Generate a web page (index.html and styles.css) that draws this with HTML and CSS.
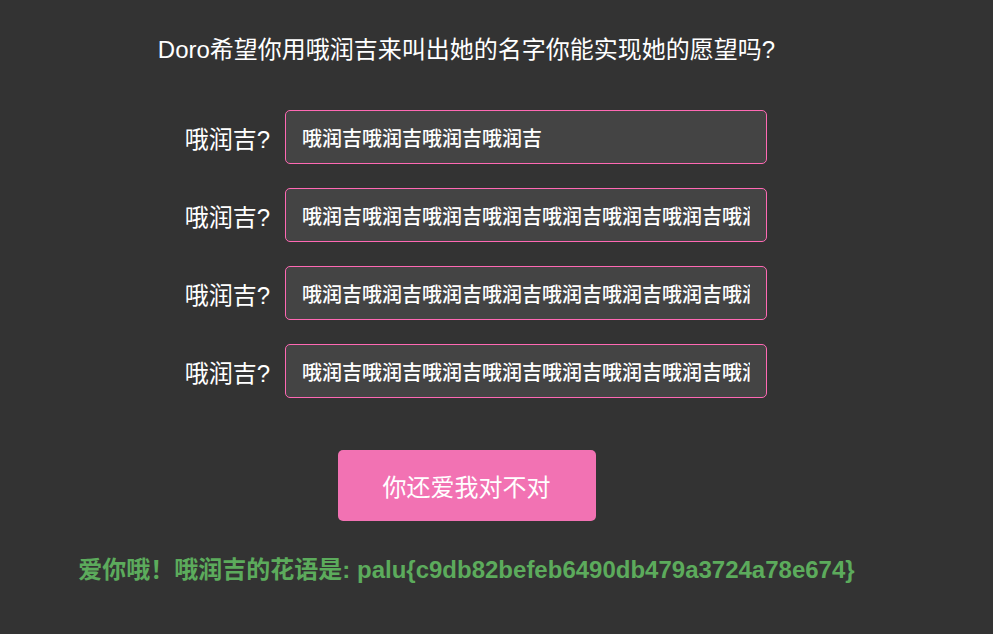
FILE: index.html
```html
<!DOCTYPE html>
<html lang="zh-CN">
<head>
  <meta charset="UTF-8">
  <meta name="viewport" content="width=device-width, initial-scale=1.0">
  <title>哦润吉</title>
  <link rel="stylesheet" href="styles.css">
</head>
<body>
  <div class="page">
    <h1>Doro希望你用哦润吉来叫出她的名字你能实现她的愿望吗?</h1>
    <form class="wish-form" onsubmit="return false;">
      <div class="row">
        <label for="a1">哦润吉?</label>
        <input id="a1" type="text" value="哦润吉哦润吉哦润吉哦润吉">
      </div>
      <div class="row">
        <label for="a2">哦润吉?</label>
        <input id="a2" type="text" value="哦润吉哦润吉哦润吉哦润吉哦润吉哦润吉哦润吉哦润吉">
      </div>
      <div class="row">
        <label for="a3">哦润吉?</label>
        <input id="a3" type="text" value="哦润吉哦润吉哦润吉哦润吉哦润吉哦润吉哦润吉哦润吉">
      </div>
      <div class="row">
        <label for="a4">哦润吉?</label>
        <input id="a4" type="text" value="哦润吉哦润吉哦润吉哦润吉哦润吉哦润吉哦润吉哦润吉">
      </div>
      <button type="submit" class="btn">你还爱我对不对</button>
    </form>
    <p class="result">爱你哦！哦润吉的花语是: palu{c9db82befeb6490db479a3724a78e674}</p>
  </div>
</body>
</html>
```

FILE: styles.css
```css
body {
  margin: 0;
  padding: 0;
  background: #333;
  color: #fff;
  font-family: 'Liberation Sans', Arial, 'Noto Sans CJK SC', sans-serif;
}
.page {
  width: 933px;
  text-align: center;
  padding-top: 33px;
}
h1 {
  font-size: 24px;
  font-weight: normal;
  line-height: 34px;
  margin: 0 0 43px;
}
.wish-form {
  display: flex;
  flex-direction: column;
  align-items: center;
  gap: 24px;
}
.row {
  display: flex;
  align-items: center;
  gap: 15px;
}
.row label {
  width: 104px;
  text-align: right;
  font-size: 24px;
}
.row input {
  box-sizing: border-box;
  width: 482px;
  height: 54px;
  padding: 0 16px;
  background: #444;
  color: #fff;
  border: 1px solid #ff69b4;
  border-radius: 5px;
  font-family: 'Liberation Sans', Arial, 'Noto Sans CJK SC', sans-serif;
  font-size: 20px;
  font-weight: 500;
  outline: none;
}
.btn {
  margin-top: 28px;
  padding: 0 45px;
  height: 71px;
  background: #f272b3;
  color: #fff;
  border: none;
  border-radius: 5px;
  font-family: 'Liberation Sans', Arial, 'Noto Sans CJK SC', sans-serif;
  font-size: 24px;
  cursor: pointer;
}
.result {
  margin: 29px 0 0;
  font-size: 24px;
  font-weight: bold;
  color: #5cab5c;
}
```
